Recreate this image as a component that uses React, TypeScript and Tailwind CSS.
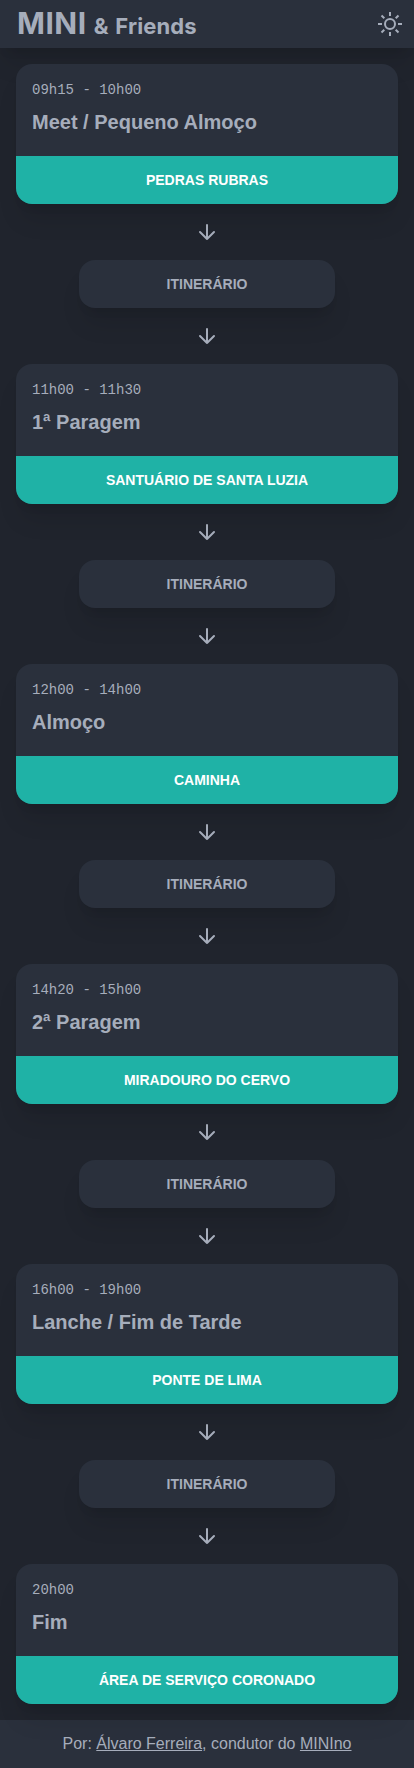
import React from "react";

type Stop = { time: string; title: string; place: string };

const stops: Stop[] = [
  { time: "09h15 - 10h00", title: "Meet / Pequeno Almoço", place: "Pedras Rubras" },
  { time: "11h00 - 11h30", title: "1ª Paragem", place: "Santuário de Santa Luzia" },
  { time: "12h00 - 14h00", title: "Almoço", place: "Caminha" },
  { time: "14h20 - 15h00", title: "2ª Paragem", place: "Miradouro do Cervo" },
  { time: "16h00 - 19h00", title: "Lanche / Fim de Tarde", place: "Ponte de Lima" },
  { time: "20h00", title: "Fim", place: "Área de Serviço Coronado" },
];

function Arrow() {
  return (
    <div className="flex h-14 items-center justify-center">
      <svg
        className="size-6"
        viewBox="0 0 24 24"
        fill="none"
        stroke="currentColor"
        strokeWidth="2"
        strokeLinecap="round"
        strokeLinejoin="round"
      >
        <path d="M12 5v14M19 12l-7 7-7-7" />
      </svg>
    </div>
  );
}

function Sun() {
  return (
    <svg className="size-6" viewBox="0 0 24 24" fill="none" stroke="currentColor" strokeWidth="2">
      <circle cx="12" cy="12" r="5" />
      <path d="M12 0v4M12 20v4M0 12h4M20 12h4M3.5 3.5l2.8 2.8M17.7 17.7l2.8 2.8M3.5 20.5l2.8-2.8M17.7 6.3l2.8-2.8" />
    </svg>
  );
}

function StopCard({ stop }: { stop: Stop }) {
  return (
    <article className="relative h-[140px] overflow-hidden rounded-2xl bg-[#2a303c] shadow-xl">
      <div className="flex h-[92px] flex-col gap-2 p-4">
        <p className="font-['Liberation_Mono',monospace] text-sm">{stop.time}</p>
        <h2 className="text-xl font-bold">{stop.title}</h2>
      </div>
      <button className="block h-12 w-full bg-[#1fb2a6] text-sm font-semibold text-white uppercase">
        {stop.place}
      </button>
    </article>
  );
}

export default function App() {
  return (
    <div className="flex min-h-[1768px] flex-col bg-[#20242d] font-['Liberation_Sans',sans-serif] text-[#a6adbb]">
      <header className="flex h-12 items-center justify-between bg-[#2a303c] pr-3 pl-[17px] shadow-xl">
        <h1 className="flex items-baseline gap-[7px] pb-0.5 font-['Inter',sans-serif] font-bold">
          <span className="text-[30px] leading-none tracking-[0.5px]">MINI</span>
          <span className="text-[22px] leading-none tracking-[0.1px] [word-spacing:1.5px]">&amp; Friends</span>
        </h1>
        <Sun />
      </header>
      <main className="px-4 py-4">
        {stops.map((stop, i) => (
          <React.Fragment key={stop.title}>
            <StopCard stop={stop} />
            {i < stops.length - 1 && (
              <>
                <Arrow />
                <button className="mx-auto block h-12 w-64 rounded-2xl bg-[#2a303c] text-sm font-semibold uppercase shadow-xl">
                  Itinerário
                </button>
                <Arrow />
              </>
            )}
          </React.Fragment>
        ))}
      </main>
      <footer className="flex h-12 items-center justify-center bg-[#2a303c]">
        <p>
          Por: <a className="underline">Álvaro Ferreira</a>, condutor do <a className="underline">MINIno</a>
        </p>
      </footer>
    </div>
  );
}
